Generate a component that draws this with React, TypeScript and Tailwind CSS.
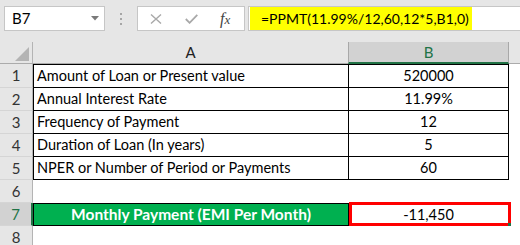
import React from "react";

type Row = {
  n: number;
  label: string;
  value: string;
  boxed: boolean;
};

const rows: Row[] = [
  { n: 1, label: "Amount of Loan or Present value", value: "520000", boxed: true },
  { n: 2, label: "Annual Interest Rate", value: "11.99%", boxed: true },
  { n: 3, label: "Frequency of Payment", value: "12", boxed: true },
  { n: 4, label: "Duration of Loan (In years)", value: "5", boxed: true },
  { n: 5, label: "NPER or Number of Period or Payments", value: "60", boxed: true },
  { n: 6, label: "", value: "", boxed: false },
];

const RowHead: React.FC<{ n: number; selected?: boolean }> = ({ n, selected }) => (
  <div
    className={`w-[33px] shrink-0 flex items-center justify-center text-[15px] border-b border-b-[#d5d5d5] ${
      selected
        ? "bg-[#d2d2d2] text-[#217346] border-r-2 border-r-[#217346]"
        : "bg-[#e6e6e6] text-[#333] border-r border-r-[#b4b4b4]"
    }`}
  >
    {n}
  </div>
);

export default function App() {
  return (
    <div
      className="w-[520px] h-[245px] overflow-hidden bg-[#e6e6e6] text-[14.5px] text-black"
      style={{ fontFamily: "Lato, 'Liberation Sans', sans-serif" }}
    >
      {/* formula bar */}
      <div className="flex h-[33px] items-start pt-[6px]">
        <div className="ml-[4px] w-[101px] h-[25px] bg-white border border-[#c6c6c6] flex items-center justify-between pl-[7px] pr-[5px] text-[15px]">
          <span>B7</span>
          <svg width="8" height="5" viewBox="0 0 8 5">
            <path d="M0 0 L8 0 L4 4.5 Z" fill="#7a7a7a" />
          </svg>
        </div>
        <div className="w-[32px] h-[25px] flex flex-col items-center justify-center gap-[3px]">
          <span className="w-[2px] h-[2px] bg-[#a6a6a6]" />
          <span className="w-[2px] h-[2px] bg-[#a6a6a6]" />
          <span className="w-[2px] h-[2px] bg-[#a6a6a6]" />
        </div>
        <div className="w-[108px] h-[25px] bg-white border border-[#c6c6c6] flex items-center">
          <svg width="12" height="10" viewBox="0 0 12 10" className="ml-[12px]">
            <path d="M1 0.5 L11 9.5 M11 0.5 L1 9.5" stroke="#a9a9a9" strokeWidth="1.4" />
          </svg>
          <svg width="13" height="10" viewBox="0 0 13 10" className="ml-[23px]">
            <path d="M0.8 5 L4.6 8.8 L12.3 0.8" stroke="#a9a9a9" strokeWidth="1.8" fill="none" />
          </svg>
          <span
            className="ml-[22px] italic text-[#444] text-[16px] leading-none"
            style={{ fontFamily: "'Liberation Serif', serif" }}
          >
            f<span className="text-[13px]">x</span>
          </span>
        </div>
        <div className="ml-[3px] flex-1 h-[25px] bg-white border-y border-l border-[#c6c6c6] flex items-stretch pl-[1px]">
          <div className="min-w-[214px] bg-[#ffff00] flex items-center pl-[11px] pr-[3px] whitespace-nowrap text-[14px]">
            =PPMT(11.99%/12,60,12*5,B1,0)
          </div>
        </div>
      </div>

      <div className="h-[9px]" />

      {/* column headers */}
      <div className="flex h-[22px] border-b border-[#ababab] text-[15px]">
        <div className="w-[33px] shrink-0 border-r border-[#b4b4b4] flex items-end justify-end pr-[3px] pb-[2px]">
          <svg width="14" height="14" viewBox="0 0 14 14">
            <path d="M14 0 L14 14 L0 14 Z" fill="#b4b4b4" />
          </svg>
        </div>
        <div className="w-[315px] shrink-0 flex items-center justify-center text-[#222]">A</div>
        <div className="w-[161px] shrink-0 bg-[#d2d2d2] border-x border-[#a8a8a8] border-b-2 border-b-[#217346] -mb-[1px] flex items-center justify-center text-[#217346]">
          B
        </div>
        <div className="flex-1" />
      </div>

      {/* data rows */}
      <div className="bg-white">
        {rows.map((r) => (
          <div key={r.n} className={`flex ${r.n === 1 ? "h-[24px]" : "h-[23px]"}`}>
            <RowHead n={r.n} />
            <div
              className={`w-[315px] shrink-0 flex items-center pl-[3px] whitespace-nowrap ${
                r.boxed ? "border-l border-b border-black" : "border-l border-white"
              } ${r.n === 1 ? "border-t" : ""}`}
            >
              {r.label}
            </div>
            <div
              className={`w-[161px] shrink-0 flex items-center justify-center ${
                r.boxed ? "border-x border-b border-black" : ""
              } ${r.n === 1 ? "border-t" : ""}`}
            >
              {r.value}
            </div>
            <div className="flex-1" />
          </div>
        ))}

        {/* row 7 */}
        <div className="flex h-[23px]">
          <RowHead n={7} selected />
          <div className="w-[315px] shrink-0 flex items-center justify-center bg-[#00b050] border-l border-y border-black text-white font-bold text-[15.5px] whitespace-nowrap">
            Monthly Payment (EMI Per Month)
          </div>
          <div className="relative w-[161px] shrink-0 flex items-center justify-center border-x border-y border-black">
            -11,450
            <div className="absolute -top-[2px] left-0 -right-[3px] -bottom-[1px] border-[3px] border-[#ff0000]">
              <span className="absolute -right-[3px] -bottom-[3px] w-[3px] h-[3px] bg-[#217346]" />
            </div>
          </div>
          <div className="flex-1" />
        </div>

        {/* row 8 */}
        <div className="flex h-[23px]">
          <RowHead n={8} />
          <div className="flex-1" />
        </div>
      </div>
    </div>
  );
}
